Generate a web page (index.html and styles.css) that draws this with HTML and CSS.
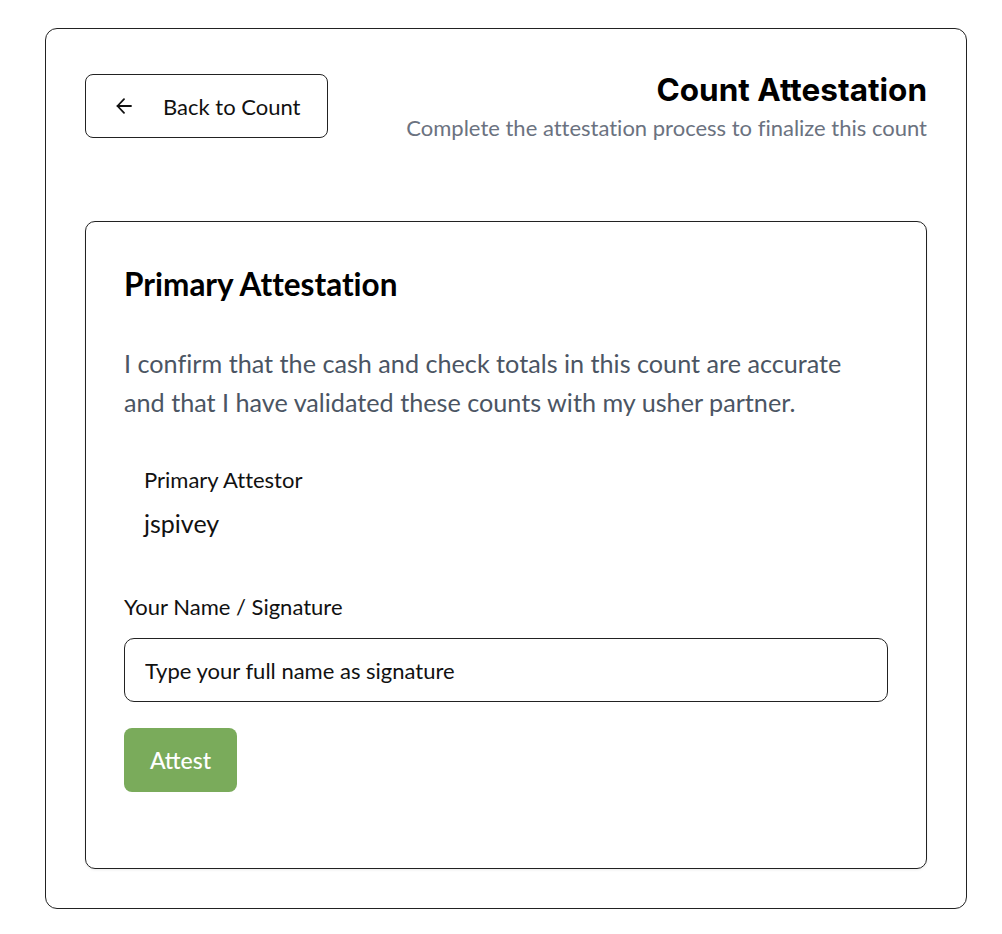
FILE: index.html
```html
<!DOCTYPE html>
<html>
<head>
<meta charset="utf-8">
<link rel="stylesheet" href="styles.css">
</head>
<body>
<div class="page">
  <div class="outer">
    <div class="header">
      <button class="back">
        <svg class="arrow" width="16" height="16" viewBox="0 0 16 16" fill="none" stroke="#111" stroke-width="1.8" stroke-linecap="round" stroke-linejoin="round"><path d="M15 8H1.5"/><path d="M8 1.2L1.5 8L8 14.8"/></svg>
        <span>Back to Count</span>
      </button>
      <div class="titles">
        <h1 class="title">Count Attestation</h1>
        <p class="subtitle">Complete the attestation process to finalize this count</p>
      </div>
    </div>
    <div class="card">
      <h2 class="card-title">Primary Attestation</h2>
      <p class="desc">I confirm that the cash and check totals in this count are accurate and that I have validated these counts with my usher partner.</p>
      <div class="attestor">
        <div class="attestor-label">Primary Attestor</div>
        <div class="attestor-name">jspivey</div>
      </div>
      <label class="field-label">Your Name / Signature</label>
      <input class="field" type="text" placeholder="Type your full name as signature">
      <button class="attest">Attest</button>
    </div>
  </div>
</div>
</body>
</html>
```

FILE: styles.css
```css
* { box-sizing: border-box; }
body {
  margin: 0;
  background: #fff;
  font-family: "Lato", "Liberation Sans", sans-serif;
  font-variant-ligatures: no-common-ligatures;
  color: #111;
}
.page {
  padding: 28px 35px 0 45px;
}
.outer {
  border: 1px solid #222;
  border-radius: 12px;
  padding: 45px 39px 39px 39px;
  height: 881px;
}
.header {
  display: flex;
  justify-content: space-between;
  align-items: flex-start;
}
.back {
  display: flex;
  align-items: center;
  width: 243px;
  height: 64px;
  border: 1px solid #222;
  border-radius: 8px;
  background: #fff;
  padding: 0 0 0 30px;
  font-family: "Lato", sans-serif;
  font-size: 22px;
  color: #111;
}
.arrow { margin-right: 31px; flex: none; }
.titles { text-align: right; }
.title {
  margin: 0;
  font-family: "Inter", "Roboto", sans-serif;
  font-weight: 700;
  font-size: 31.5px;
  line-height: 32px;
  color: #000;
}
.subtitle {
  margin: 8px 0 0;
  font-size: 22px;
  line-height: 28px;
  color: #6b7280;
}
.card {
  margin-top: 79px;
  border: 1px solid #222;
  border-radius: 10px;
  padding: 38px 38px 40px 38px;
  height: 648px;
  box-shadow: 0 1px 3px rgba(0,0,0,0.08);
}
.card-title {
  margin: 0;
  font-size: 31.5px;
  line-height: 48px;
  font-weight: 700;
  color: #000;
}
.desc {
  margin: 36px 0 0;
  font-size: 25.2px;
  line-height: 39px;
  color: #4b5563;
}
.attestor {
  margin-top: 43px;
  padding-left: 20px;
}
.attestor-label {
  font-size: 22px;
  line-height: 30px;
}
.attestor-name {
  margin-top: 12px;
  font-size: 25px;
  line-height: 32px;
}
.field-label {
  display: block;
  margin-top: 53px;
  font-size: 22px;
  line-height: 30px;
}
.field {
  display: block;
  margin-top: 16px;
  width: 100%;
  height: 64px;
  border: 1px solid #222;
  border-radius: 10px;
  padding: 0 20px;
  font-family: "Lato", sans-serif;
  font-size: 22px;
  color: #111;
}
.field::placeholder { color: #111; opacity: 1; }
.attest {
  display: block;
  margin-top: 26px;
  width: 113px;
  height: 64px;
  border: none;
  border-radius: 8px;
  background: #7aab5b;
  color: #fff;
  font-family: "Lato", sans-serif;
  font-size: 23px;
  font-weight: 500;
}
```
